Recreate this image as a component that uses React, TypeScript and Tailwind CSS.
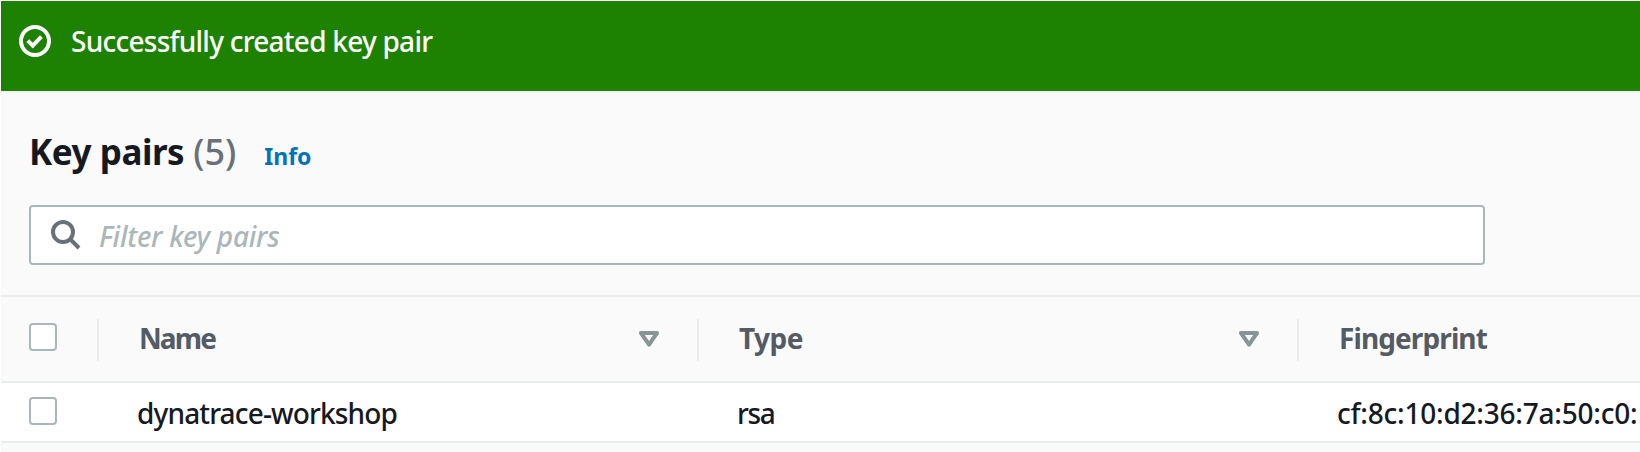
import { ReactNode } from "react";

const columns = [
  { label: "Name", value: "dynatrace-workshop", sortable: true, head: "tracking-[-1.9px]", body: "tracking-[-0.85px]" },
  { label: "Type", value: "rsa", sortable: true, head: "tracking-[-0.5px]", body: "tracking-[-1.4px]" },
  { label: "Fingerprint", value: "cf:8c:10:d2:36:7a:50:c0:", sortable: false, head: "tracking-[-0.9px]", body: "tracking-[-0.22px]" },
];

function Checkbox() {
  return <span className="block size-7 shrink-0 rounded-[4px] border-2 border-[#aab7b8] bg-white" />;
}

function SortIcon() {
  return (
    <svg width="20" height="16" viewBox="0 0 20 16" fill="none" stroke="#879596" strokeWidth="4" strokeLinejoin="round">
      <path d="M2 2h16L10 13.6z" />
    </svg>
  );
}

function Cell({ children, className }: { children: ReactNode; className: string }) {
  return <div className={`flex w-[600px] shrink-0 whitespace-nowrap ${className}`}>{children}</div>;
}

export default function App() {
  return (
    <div className="h-[452px] w-[1640px] overflow-hidden bg-white pt-px pl-px font-['Noto_Sans',sans-serif] text-[28px] leading-9 text-[#16191f]">
      <header className="flex h-[90px] bg-[#1d8102] pt-[22px] pl-[18px] text-white">
        <svg width="32" height="32" viewBox="0 0 32 32" fill="none" stroke="currentColor" strokeWidth="4" className="mt-0.5 shrink-0">
          <circle cx="16" cy="16" r="14" />
          <path d="M8.8 15.6l5 5 8.6-9" />
        </svg>
        <span className="ml-[20px] font-medium tracking-[-0.75px] whitespace-nowrap">Successfully created key pair</span>
      </header>

      <main className="h-[361px] border-t-2 border-[#f4f4f4] bg-[#fafafa]">
        <section className="flex h-[202px] flex-col pl-7">
          <div className="flex items-baseline pt-[35px] leading-12">
            <h1 className="text-[35px] font-bold tracking-[-0.45px]">Key pairs</h1>
            <span className="ml-[9px] text-[36px] font-medium text-[#687078]">(5)</span>
            <a className="ml-7 text-[23px] font-bold text-[#0073bb]">Info</a>
          </div>
          <div className="mt-[25px] flex h-[60px] w-[1456px] items-center rounded-[4px] border-2 border-[#aab7b8] bg-white pl-5">
            <svg width="30" height="30" viewBox="0 0 30 30" fill="none" stroke="#687078" strokeWidth="4" className="shrink-0">
              <circle cx="12" cy="12" r="10" />
              <path d="M19 19l9 9" />
            </svg>
            <span className="mt-0.5 ml-[18px] font-medium tracking-[-0.25px] text-[#aab7b8] italic">Filter key pairs</span>
          </div>
        </section>

        <section>
          <div className="flex h-[88px] border-y-2 border-[#eaeded] pt-[22px] pl-7 font-bold text-[#545b64]">
            <div className="w-[68px] shrink-0 pt-1">
              <Checkbox />
            </div>
            {columns.map((c) => (
              <Cell key={c.label} className="h-[42px] border-l-2 border-[#eaeded] pl-[40px]">
                <span className={`w-[500px] pt-px ${c.head}`}>{c.label}</span>
                {c.sortable && <span className="pt-3"><SortIcon /></span>}
              </Cell>
            ))}
          </div>
          <div className="flex h-[60px] border-b-2 border-[#eaeded] bg-white pt-[12px] pl-7">
            <div className="w-[68px] shrink-0 pt-0.5">
              <Checkbox />
            </div>
            {columns.map((c) => (
              <Cell key={c.label} className="pl-[40px] font-medium">
                <span className={c.body}>{c.value}</span>
              </Cell>
            ))}
          </div>
        </section>
      </main>
    </div>
  );
}
